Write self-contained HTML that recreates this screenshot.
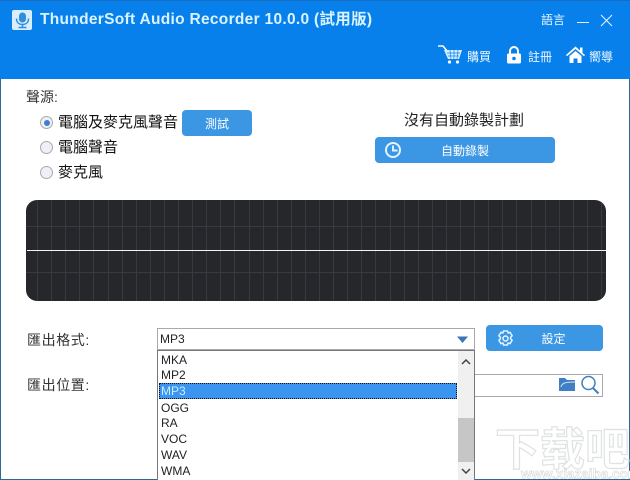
<!DOCTYPE html>
<html><head><meta charset="utf-8">
<style>
html,body{margin:0;padding:0;background:#fff}
#w{position:relative;width:630px;height:480px;overflow:hidden;background:#fff;font-family:"Liberation Sans","Noto Sans CJK TC",sans-serif;color:#222}
.a{position:absolute;white-space:nowrap}
.btn{position:absolute;background:#3b96e4;border-radius:4px;color:#fff;text-align:center;font-size:12px}
.r{position:absolute;left:40px;width:11px;height:11px;border-radius:50%;background:#eef0f5;border:1px solid #a8aab0;box-sizing:content-box}
.li{position:absolute;left:3px;font-size:12px;line-height:16px;color:#222}
</style></head><body>
<div id="w">
<div class="a" style="left:0;top:0;width:630px;height:79px;background:#0880ec"></div>
<div class="a" style="left:0;top:0;width:630px;height:1px;background:#1a6cc0"></div>
<div class="a" style="left:0;top:79px;width:1px;height:401px;background:#2c6a92"></div>
<div class="a" style="left:629px;top:79px;width:1px;height:401px;background:#2c6a92"></div>
<div class="a" style="left:0;top:479px;width:630px;height:1px;background:#2c6a92"></div>

<svg class="a" style="left:12px;top:10px" width="21" height="20" viewBox="0 0 21 20">
<rect width="20" height="20" rx="2" fill="#d8eefb"/>
<rect x="7" y="2.500" width="7" height="10" rx="3.500" fill="#2f8fdc"/>
<path d="M4.500 8.500c0 4 2.500 6 6 6s6-2 6-6" fill="none" stroke="#2f8fdc" stroke-width="1.500"/>
<path d="M10.500 14.500v2.500M6.500 17.500h8" stroke="#2f8fdc" stroke-width="1.500"/>
</svg>
<div class="a" style="left:40px;top:10px;font-weight:bold;font-size:15.500px;letter-spacing:.3px;line-height:20px;color:#d9f3ff">ThunderSoft Audio Recorder 10.0.0 (試用版)</div>

<div class="a" style="left:541px;top:12px;font-size:12px;line-height:17px;color:#e8f6ff">語言</div>
<div class="a" style="left:577px;top:22px;width:12px;height:1px;background:#e8f6ff"></div>
<svg class="a" style="left:600px;top:14px" width="13" height="13"><path d="M1 1L12 12M12 1L1 12" stroke="#e8f6ff" stroke-width="1"/></svg>

<svg class="a" style="left:437px;top:44px" width="26" height="20" viewBox="0 0 26 20">
<path d="M1 2h5l4 5" fill="none" stroke="#f2faff" stroke-width="1.600"/>
<path d="M7 6h18l-3 9H11z" fill="#d9effd"/>
<path d="M10 9h13M11 12h11M13 6l1 9M17 6v9M21 6l-1 9" stroke="#0880ec" stroke-width=".7"/>
<circle cx="12.500" cy="18" r="1.600" fill="#fff"/><circle cx="20.500" cy="18" r="1.600" fill="#fff"/>
</svg>
<div class="a" style="left:467px;top:49px;font-size:12px;line-height:17px;color:#f0f9ff">購買</div>

<svg class="a" style="left:506px;top:46px" width="16" height="18" viewBox="0 0 16 18">
<path d="M4 8V5a4 4 0 0 1 8 0v3" fill="none" stroke="#fff" stroke-width="2"/>
<rect x="1" y="7.500" width="14" height="10" rx="1.500" fill="#fff"/>
<circle cx="8" cy="12.500" r="1.800" fill="#0880ec"/>
</svg>
<div class="a" style="left:528px;top:49px;font-size:12px;line-height:17px;color:#f0f9ff">註冊</div>

<svg class="a" style="left:566px;top:46px" width="19" height="17" viewBox="0 0 19 17">
<path d="M0 9L9.500 .5 14 4.500V1.500h2.500V7L19 9l-1 1.200L9.500 3 1 10.200z" fill="#fff"/>
<path d="M3.500 10L9.500 5l6 5v7H11.500v-4.500h-4V17h-4z" fill="#fff"/>
</svg>
<div class="a" style="left:589px;top:49px;font-size:12px;line-height:17px;color:#f0f9ff">嚮導</div>

<div class="a" style="left:26px;top:88px;font-size:14px;line-height:18px;color:#333">聲源:</div>
<div class="r" style="top:116px"></div>
<div class="a" style="left:43.500px;top:119.500px;width:6px;height:6px;border-radius:50%;background:#3f7fd0"></div>
<div class="r" style="top:141px"></div>
<div class="r" style="top:166px"></div>
<div class="a" style="left:58px;top:112.500px;font-size:15px;line-height:20px;color:#111">電腦及麥克風聲音</div>
<div class="a" style="left:58px;top:137.500px;font-size:15px;line-height:20px;color:#111">電腦聲音</div>
<div class="a" style="left:58px;top:162.500px;font-size:15px;line-height:20px;color:#111">麥克風</div>
<div class="btn" style="left:182px;top:110px;width:70px;height:26px;line-height:28px">測試</div>

<div class="a" style="left:404px;top:112px;font-size:15px;line-height:18px;color:#222">沒有自動錄製計劃</div>
<div class="btn" style="left:375px;top:137px;width:180px;height:26px;line-height:28px">自動錄製</div>
<svg class="a" style="left:384px;top:141px" width="18" height="18"><circle cx="9" cy="9" r="7" fill="none" stroke="#e4f4ff" stroke-width="2"/><path d="M9 4.500V9.500H13.500" fill="none" stroke="#e4f4ff" stroke-width="2"/></svg>

<svg class="a" style="left:26px;top:200px" width="580" height="101" viewBox="0 0 580 101">
<defs><clipPath id="c"><rect width="580" height="101" rx="11"/></clipPath></defs>
<g clip-path="url(#c)">
<rect width="580" height="101" fill="#26272b"/>
<path fill="none" stroke="#393a3f" stroke-width="1" d="M11.500 0v101M25.500 0v101M39.500 0v101M53.500 0v101M67.500 0v101M82.500 0v101M96.500 0v101M110.500 0v101M124.500 0v101M138.500 0v101M152.500 0v101M166.500 0v101M180.500 0v101M194.500 0v101M208.500 0v101M223.500 0v101M237.500 0v101M251.500 0v101M265.500 0v101M279.500 0v101M293.500 0v101M307.500 0v101M321.500 0v101M335.500 0v101M349.500 0v101M364.500 0v101M378.500 0v101M392.500 0v101M406.500 0v101M420.500 0v101M434.500 0v101M448.500 0v101M462.500 0v101M476.500 0v101M490.500 0v101M505.500 0v101M519.500 0v101M533.500 0v101M547.500 0v101M561.500 0v101M575.500 0v101"/>
<rect y="26" width="580" height="1" fill="#393a3f"/>
<rect y="72" width="580" height="1" fill="#393a3f"/>
<rect x="1" y="50" width="579" height="1" fill="#f4f4f4"/>
</g></svg>

<div class="a" style="left:27px;top:331px;font-size:14px;line-height:18px;color:#333;letter-spacing:.6px">匯出格式:</div>
<div class="a" style="left:27px;top:376px;font-size:14px;line-height:18px;color:#333;letter-spacing:.6px">匯出位置:</div>

<div class="a" style="left:157px;top:328px;width:318px;height:22px;box-sizing:border-box;border:1px solid #aaa;background:#fff"></div>
<div class="a" style="left:160px;top:331px;font-size:12px;line-height:16px;color:#222">MP3</div>
<svg class="a" style="left:457px;top:336px" width="12" height="8"><path d="M0 .5h11L5.500 7z" fill="#3b74b8"/></svg>

<div class="btn" style="left:486px;top:325px;width:117px;height:26px;line-height:29px;padding-left:18px;box-sizing:border-box">設定</div>
<svg class="a" style="left:497px;top:330px" width="17" height="17" viewBox="0 0 17 17"><path d="M6.500 1h4l.6 2 2-.6 2 3.400-1.500 1.500v1.400l1.500 1.500-2 3.400-2-.6-.6 2h-4l-.6-2-2 .6-2-3.400 1.500-1.500V7.300L1.900 5.800l2-3.400 2 .6z" fill="none" stroke="#e4f4ff" stroke-width="1.500"/><circle cx="8.500" cy="8.500" r="2.500" fill="none" stroke="#e4f4ff" stroke-width="1.500"/></svg>

<div class="a" style="left:470px;top:374px;width:133px;height:23px;box-sizing:border-box;border:1px solid #aaa;border-left:0;background:#fff"></div>
<svg class="a" style="left:559px;top:377px" width="17" height="15"><path d="M0 1h6l2 2h8v11H0z" fill="#3f7fc4"/><path d="M2 10C3 6 6 5 16 5" fill="none" stroke="#cfe2f5" stroke-width="1"/></svg>
<svg class="a" style="left:580px;top:375px" width="20" height="20"><circle cx="8.500" cy="8" r="6.500" fill="none" stroke="#3f7fc4" stroke-width="1.500"/><path d="M13 13l5.500 5.500" stroke="#3f7fc4" stroke-width="2"/></svg>

<div class="a" style="left:157px;top:350px;width:318px;height:130px;box-sizing:border-box;border:1px solid #777;border-bottom:0;background:#fff">
<div class="li" style="top:1px">MKA</div>
<div class="li" style="top:16px">MP2</div>
<div class="a" style="left:1px;top:32px;width:298px;height:16px;box-sizing:border-box;background:#3a94f0;border:1px dotted #111"></div>
<div class="li" style="top:32px;color:#c8f0ff">MP3</div>
<div class="li" style="top:49px">OGG</div>
<div class="li" style="top:64px">RA</div>
<div class="li" style="top:80px">VOC</div>
<div class="li" style="top:96px">WAV</div>
<div class="li" style="top:112px">WMA</div>
<div class="a" style="left:300px;top:0;width:16px;height:130px;background:#f0f0f0"></div>
<div class="a" style="left:300px;top:67px;width:16px;height:44px;background:#c6c6c6"></div>
<svg class="a" style="left:303px;top:8px" width="10" height="6"><path d="M1 5l4-4 4 4" fill="none" stroke="#444" stroke-width="1.500"/></svg>
<svg class="a" style="left:303px;top:117px" width="10" height="6"><path d="M1 1l4 4 4-4" fill="none" stroke="#444" stroke-width="1.500"/></svg>
</div>

<svg class="a" style="left:495px;top:420px" width="135" height="60" viewBox="0 0 135 60">
<text x="0" y="45" font-family="Liberation Sans,Noto Sans CJK SC,sans-serif" font-size="45" font-weight="bold" fill="#fff" stroke="#dfe2e2" stroke-width="1.200">下载吧</text>
<text x="26" y="58.500" font-family="Liberation Sans,sans-serif" font-size="13.500" font-weight="bold" fill="#fff" stroke="#cdd0d0" stroke-width=".5">www.xiazaiba.com</text>
</svg>
</div>
</body></html>
